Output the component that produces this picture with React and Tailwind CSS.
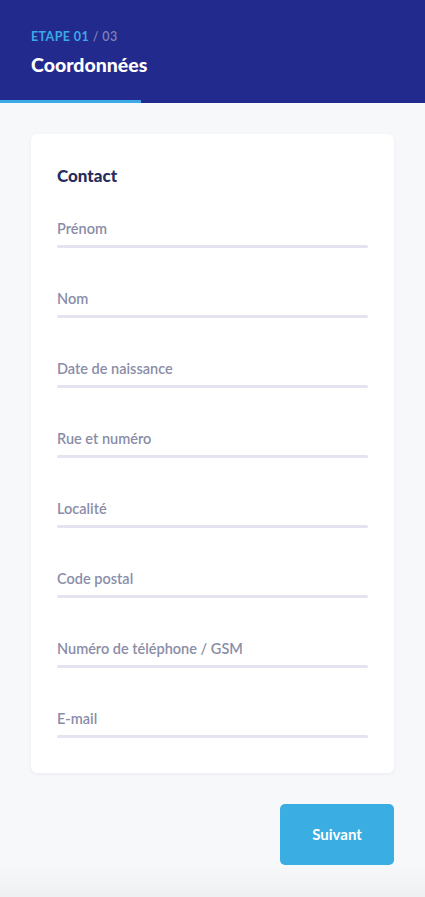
import React from 'react';

const fields = [
  'Prénom',
  'Nom',
  'Date de naissance',
  'Rue et numéro',
  'Localité',
  'Code postal',
  'Numéro de téléphone / GSM',
  'E-mail',
];

export default function App() {
  return (
    <div className="min-h-[897px] w-[425px] bg-[#f7f8fa] flex flex-col" style={{ fontFamily: 'Lato, "Open Sans", sans-serif' }}>
      {/* Step header */}
      <div className="relative h-[103px] bg-[#232a8d] px-[31px] pt-[29px]">
        <div className="text-[12.5px] font-bold tracking-[0.4px] leading-[16px]">
          <span className="text-[#3aa9e6]">ETAPE 01</span>
          <span className="text-[#7d83b8] font-semibold"> / 03</span>
        </div>
        <h1 className="mt-[8px] text-[19.5px] font-black text-white leading-[24px]">Coordonnées</h1>
        <div className="absolute left-0 bottom-0 h-[3px] w-[141px] bg-[#3aa9e6]" />
      </div>

      <div className="px-[31px] pt-[31px]">
        <div className="bg-white rounded-[6px] shadow-[0_1px_4px_rgba(30,40,90,0.06)] px-[26px] pt-[30px] pb-[35px]">
          <h2 className="text-[17px] font-black text-[#262c5c] leading-[24px]">Contact</h2>
          <div className="mt-[31px] flex flex-col gap-[41px]">
            {fields.map(label => (
              <div key={label}>
                <div className="text-[14.5px] font-semibold text-[#8a8da8] leading-[20px]">{label}</div>
                <div className="mt-[6px] h-[3px] rounded-full bg-[#e4e4f1]" />
              </div>
            ))}
          </div>
        </div>

        <div className="mt-[31px] flex justify-end">
          <button className="w-[114px] h-[61px] rounded-[5px] bg-[#3aade3] text-white text-[15px] font-bold">
            Suivant
          </button>
        </div>
      </div>

      <div className="flex-1 min-h-[32px] bg-gradient-to-b from-[#f7f8fa] to-[#eef0f2]" />
    </div>
  );
}
